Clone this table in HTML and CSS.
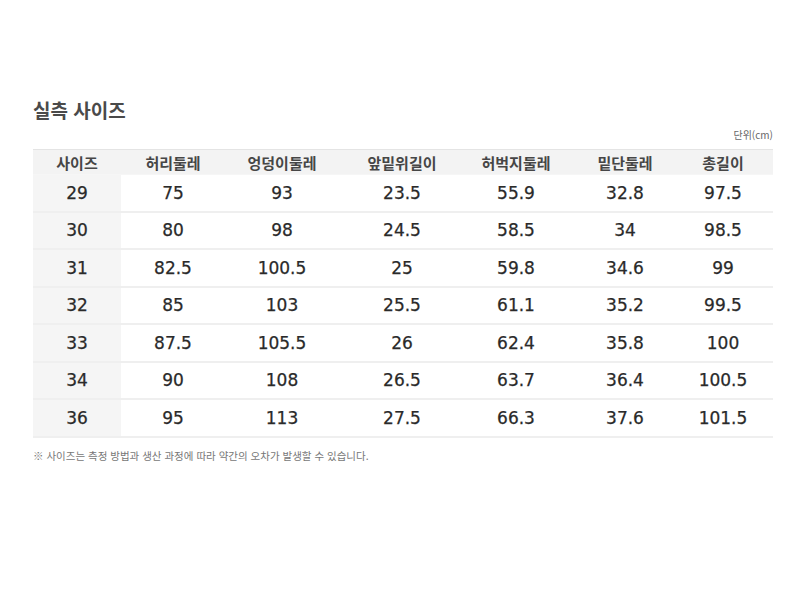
FILE: index.html
```html
<!DOCTYPE html>
<html lang="ko">
<head>
<meta charset="utf-8">
<title>실측 사이즈</title>
<link rel="stylesheet" href="styles.css">
</head>
<body>
<div class="page">
  <h2 class="title">실측 사이즈</h2>
  <div class="unit">단위(cm)</div>
  <div class="table">
    <div class="row head">
      <div class="cell">사이즈</div>
      <div class="cell">허리둘레</div>
      <div class="cell">엉덩이둘레</div>
      <div class="cell">앞밑위길이</div>
      <div class="cell">허벅지둘레</div>
      <div class="cell">밑단둘레</div>
      <div class="cell last">총길이</div>
    </div>
    <div class="row"><div class="cell size">29</div><div class="cell">75</div><div class="cell">93</div><div class="cell">23.5</div><div class="cell">55.9</div><div class="cell">32.8</div><div class="cell last">97.5</div></div>
    <div class="row"><div class="cell size">30</div><div class="cell">80</div><div class="cell">98</div><div class="cell">24.5</div><div class="cell">58.5</div><div class="cell">34</div><div class="cell last">98.5</div></div>
    <div class="row"><div class="cell size">31</div><div class="cell">82.5</div><div class="cell">100.5</div><div class="cell">25</div><div class="cell">59.8</div><div class="cell">34.6</div><div class="cell last">99</div></div>
    <div class="row"><div class="cell size">32</div><div class="cell">85</div><div class="cell">103</div><div class="cell">25.5</div><div class="cell">61.1</div><div class="cell">35.2</div><div class="cell last">99.5</div></div>
    <div class="row"><div class="cell size">33</div><div class="cell">87.5</div><div class="cell">105.5</div><div class="cell">26</div><div class="cell">62.4</div><div class="cell">35.8</div><div class="cell last">100</div></div>
    <div class="row"><div class="cell size">34</div><div class="cell">90</div><div class="cell">108</div><div class="cell">26.5</div><div class="cell">63.7</div><div class="cell">36.4</div><div class="cell last">100.5</div></div>
    <div class="row"><div class="cell size">36</div><div class="cell">95</div><div class="cell">113</div><div class="cell">27.5</div><div class="cell">66.3</div><div class="cell">37.6</div><div class="cell last">101.5</div></div>
  </div>
  <p class="note">※ 사이즈는 측정 방법과 생산 과정에 따라 약간의 오차가 발생할 수 있습니다.</p>
</div>
</body>
</html>
```

FILE: styles.css
```css
html, body {
  margin: 0;
  padding: 0;
  background: #ffffff;
}

.page {
  width: 740px;
  padding: 99px 27px 0 33px;
  font-family: "Noto Sans CJK KR", "DejaVu Sans", sans-serif;
  color: #333;
}

.title {
  margin: 0;
  font-size: 19px;
  line-height: 22px;
  font-weight: 700;
  color: #4a4a4a;
}

.unit {
  margin-top: 8px;
  text-align: right;
  font-size: 10px;
  line-height: 12px;
  color: #666;
}

.table {
  margin-top: 8px;
  border-top: 1px solid #e4e4e4;
}

.row {
  display: grid;
  grid-template-columns: 88px 104px 114px 126px 102px 116px 90px;
  height: 37.5px;
  border-bottom: 2px solid #efefef;
  box-sizing: border-box;
}

.row.head {
  height: 25px;
  background: #f3f3f3;
  border-bottom: 1px solid #f6f6f6;
}

.cell {
  display: flex;
  align-items: center;
  justify-content: center;
  font-family: "DejaVu Sans", "Noto Sans CJK KR", sans-serif;
  font-size: 17px;
  color: #2a2a2a;
  -webkit-text-stroke: 0.25px #2a2a2a;
}

.cell.last {
  padding-right: 10px;
}

.cell.size {
  background: #f5f5f5;
}

.head .cell {
  font-family: "Noto Sans CJK KR", sans-serif;
  font-size: 15px;
  font-weight: 700;
  color: #464646;
  -webkit-text-stroke: 0;
  padding-top: 1px;
}

.note {
  margin: 11px 0 0;
  font-size: 10.5px;
  line-height: 14px;
  color: #777;
}
```
